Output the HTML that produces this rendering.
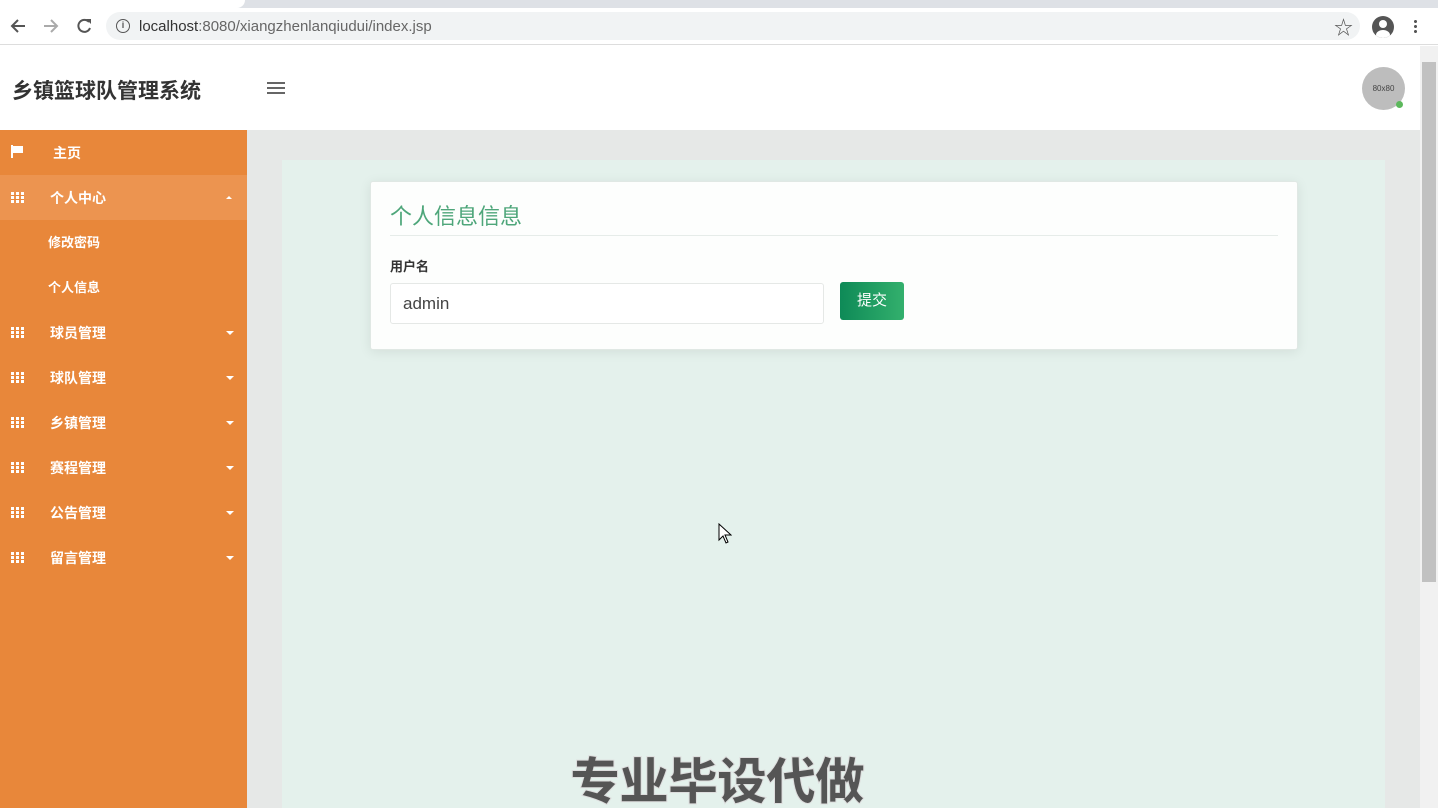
<!DOCTYPE html>
<html><head><meta charset="utf-8"><style>
*{margin:0;padding:0;box-sizing:border-box}
body{width:1438px;height:808px;overflow:hidden;position:relative;background:#fff;font-family:"Liberation Sans","Noto Sans CJK SC",sans-serif}
.abs{position:absolute}
.menu div{position:absolute;left:0;width:247px;height:45px;color:#fff;font-size:14px;line-height:45px}
.menu span{font-weight:bold}
.grid{position:absolute;left:11px;top:17px;width:13px;height:11px;background:
linear-gradient(90deg,#fff 3px,transparent 3px,transparent 5px,#fff 5px,#fff 8px,transparent 8px,transparent 10px,#fff 10px);}
.grid:after{content:"";position:absolute;left:0;top:3px;width:13px;height:1px;background:#e8873a;box-shadow:0 4px 0 #e8873a}
.car{position:absolute;left:226px;top:21px;border-left:4px solid transparent;border-right:4px solid transparent;border-top:4px solid #fff}
</style></head><body>
<div class="abs" style="left:0;top:0;width:1438px;height:8px;background:#dee1e6"></div>
<div class="abs" style="left:0;top:0;width:245px;height:8px;background:#fff;border-radius:0 0 8px 0"></div>
<div class="abs" style="left:0;top:8px;width:1438px;height:37px;background:#fff;border-bottom:1px solid #ddd"></div>
<svg class="abs" style="left:8px;top:16px" width="90" height="20" viewBox="0 0 90 20"><path d="M17 10H4M10 4l-6 6 6 6" stroke="#555" stroke-width="2" fill="none"/><path d="M36 10h13M43 4l6 6-6 6" stroke="#aaa" stroke-width="2" fill="none"/><path d="M81 6a6 6 0 1 0 1 6" stroke="#555" stroke-width="2" fill="none"/><path d="M78 3h5v5z" fill="#555"/></svg>
<div class="abs" style="left:106px;top:12px;width:1254px;height:28px;background:#f1f3f4;border-radius:14px"></div>
<div class="abs" style="left:116px;top:19px;width:14px;height:14px;border:1.5px solid #555;border-radius:50%;font-size:9px;text-align:center;line-height:11px;color:#555;font-weight:bold">i</div>
<div class="abs" style="left:139px;top:18px;font-size:15px;color:#333">localhost<span style="color:#666">:8080/xiangzhenlanqiudui/index.jsp</span></div>
<div class="abs" style="left:1334px;top:13px;font-size:19px;color:#555">☆</div>
<div class="abs" style="left:1372px;top:16px;width:22px;height:22px;border-radius:50%;background:#555;overflow:hidden"><div class="abs" style="left:7px;top:4px;width:8px;height:8px;border-radius:50%;background:#fff"></div><div class="abs" style="left:4px;top:14px;width:14px;height:10px;border-radius:50%;background:#fff"></div></div>
<div class="abs" style="left:1414px;top:19px;width:3px;height:14px;background:radial-gradient(circle,#555 1.4px,transparent 1.6px) 0 0/3px 5px"></div>
<div class="abs" style="left:12px;top:75px;font-size:21px;font-weight:bold;color:#333">乡镇篮球队管理系统</div>
<div class="abs" style="left:267px;top:82px;width:18px;height:12px;border-top:2px solid #666;border-bottom:2px solid #666"><div style="margin-top:3px;height:2px;background:#666"></div></div>
<div class="abs" style="left:1362px;top:67px;width:43px;height:43px;border-radius:50%;background:#bdbdbd;font-size:8px;color:#444;text-align:center;line-height:43px">80x80</div>
<div class="abs" style="left:1396px;top:101px;width:7px;height:7px;border-radius:50%;background:#5cb85c"></div>
<div class="abs" style="left:1420px;top:46px;width:18px;height:762px;background:#f1f1f1"></div>
<div class="abs" style="left:1422px;top:62px;width:14px;height:520px;background:#c1c1c1"></div>
<div class="abs" style="left:247px;top:130px;width:1173px;height:678px;background:#e6e8e7"></div>
<div class="abs" style="left:282px;top:160px;width:1103px;height:648px;background:#e4f1ec"></div>
<div class="abs" style="left:0;top:130px;width:247px;height:678px;background:#e8873a"></div>
<div class="menu">
<div style="top:130px"><svg class="abs" style="left:11px;top:15px" width="13" height="13"><path d="M1 0v13" stroke="#fff" stroke-width="2"/><path d="M2 1h10v7H2z" fill="#fff"/></svg><span style="position:absolute;left:53px;top:1px">主页</span></div>
<div style="top:175px;background:#ec9450"><i class="grid"></i><span style="position:absolute;left:50px;top:1px">个人中心</span><i style="position:absolute;left:226px;top:21px;border-left:3px solid transparent;border-right:3px solid transparent;border-bottom:3px solid #fff"></i></div>
<div style="top:220px"><span style="position:absolute;left:48px;font-size:13px">修改密码</span></div>
<div style="top:265px"><span style="position:absolute;left:48px;font-size:13px">个人信息</span></div>
<div style="top:310px"><i class="grid"></i><span style="position:absolute;left:50px;top:1px">球员管理</span><i class="car"></i></div>
<div style="top:355px"><i class="grid"></i><span style="position:absolute;left:50px;top:1px">球队管理</span><i class="car"></i></div>
<div style="top:400px"><i class="grid"></i><span style="position:absolute;left:50px;top:1px">乡镇管理</span><i class="car"></i></div>
<div style="top:445px"><i class="grid"></i><span style="position:absolute;left:50px;top:1px">赛程管理</span><i class="car"></i></div>
<div style="top:490px"><i class="grid"></i><span style="position:absolute;left:50px;top:1px">公告管理</span><i class="car"></i></div>
<div style="top:535px"><i class="grid"></i><span style="position:absolute;left:50px;top:1px">留言管理</span><i class="car"></i></div>
</div>
<div class="abs" style="left:370px;top:181px;width:928px;height:169px;background:#fdfefd;border:1px solid #e0e8e4;border-radius:3px;box-shadow:0 2px 12px rgba(0,0,0,.08)"></div>
<div class="abs" style="left:390px;top:199px;font-size:22px;color:#4ea67a">个人信息信息</div>
<div class="abs" style="left:390px;top:235px;width:888px;height:1px;background:#e6ece9"></div>
<div class="abs" style="left:390px;top:256px;font-size:13px;font-weight:bold;color:#333">用户名</div>
<div class="abs" style="left:390px;top:283px;width:434px;height:41px;border:1px solid #e5e8e6;border-radius:3px;background:#fff;font-size:17px;color:#444;line-height:39px;padding-left:12px">admin</div>
<div class="abs" style="left:840px;top:282px;width:64px;height:38px;border-radius:3px;background:linear-gradient(90deg,#0e8a57,#33b06d);color:#fff;font-size:15px;text-align:center;line-height:38px">提交</div>
<svg class="abs" style="left:718px;top:523px" width="14" height="22"><path d="M1 1v16l4-4 3 7 2-1-3-7h6z" fill="#fff" stroke="#000" stroke-width="1"/></svg>
<div class="abs" style="left:570px;top:752px;font-size:50px;font-weight:900;color:#555;letter-spacing:-1px;-webkit-text-stroke:1px #ddd;line-height:60px">专业毕设代做</div>
</body></html>
